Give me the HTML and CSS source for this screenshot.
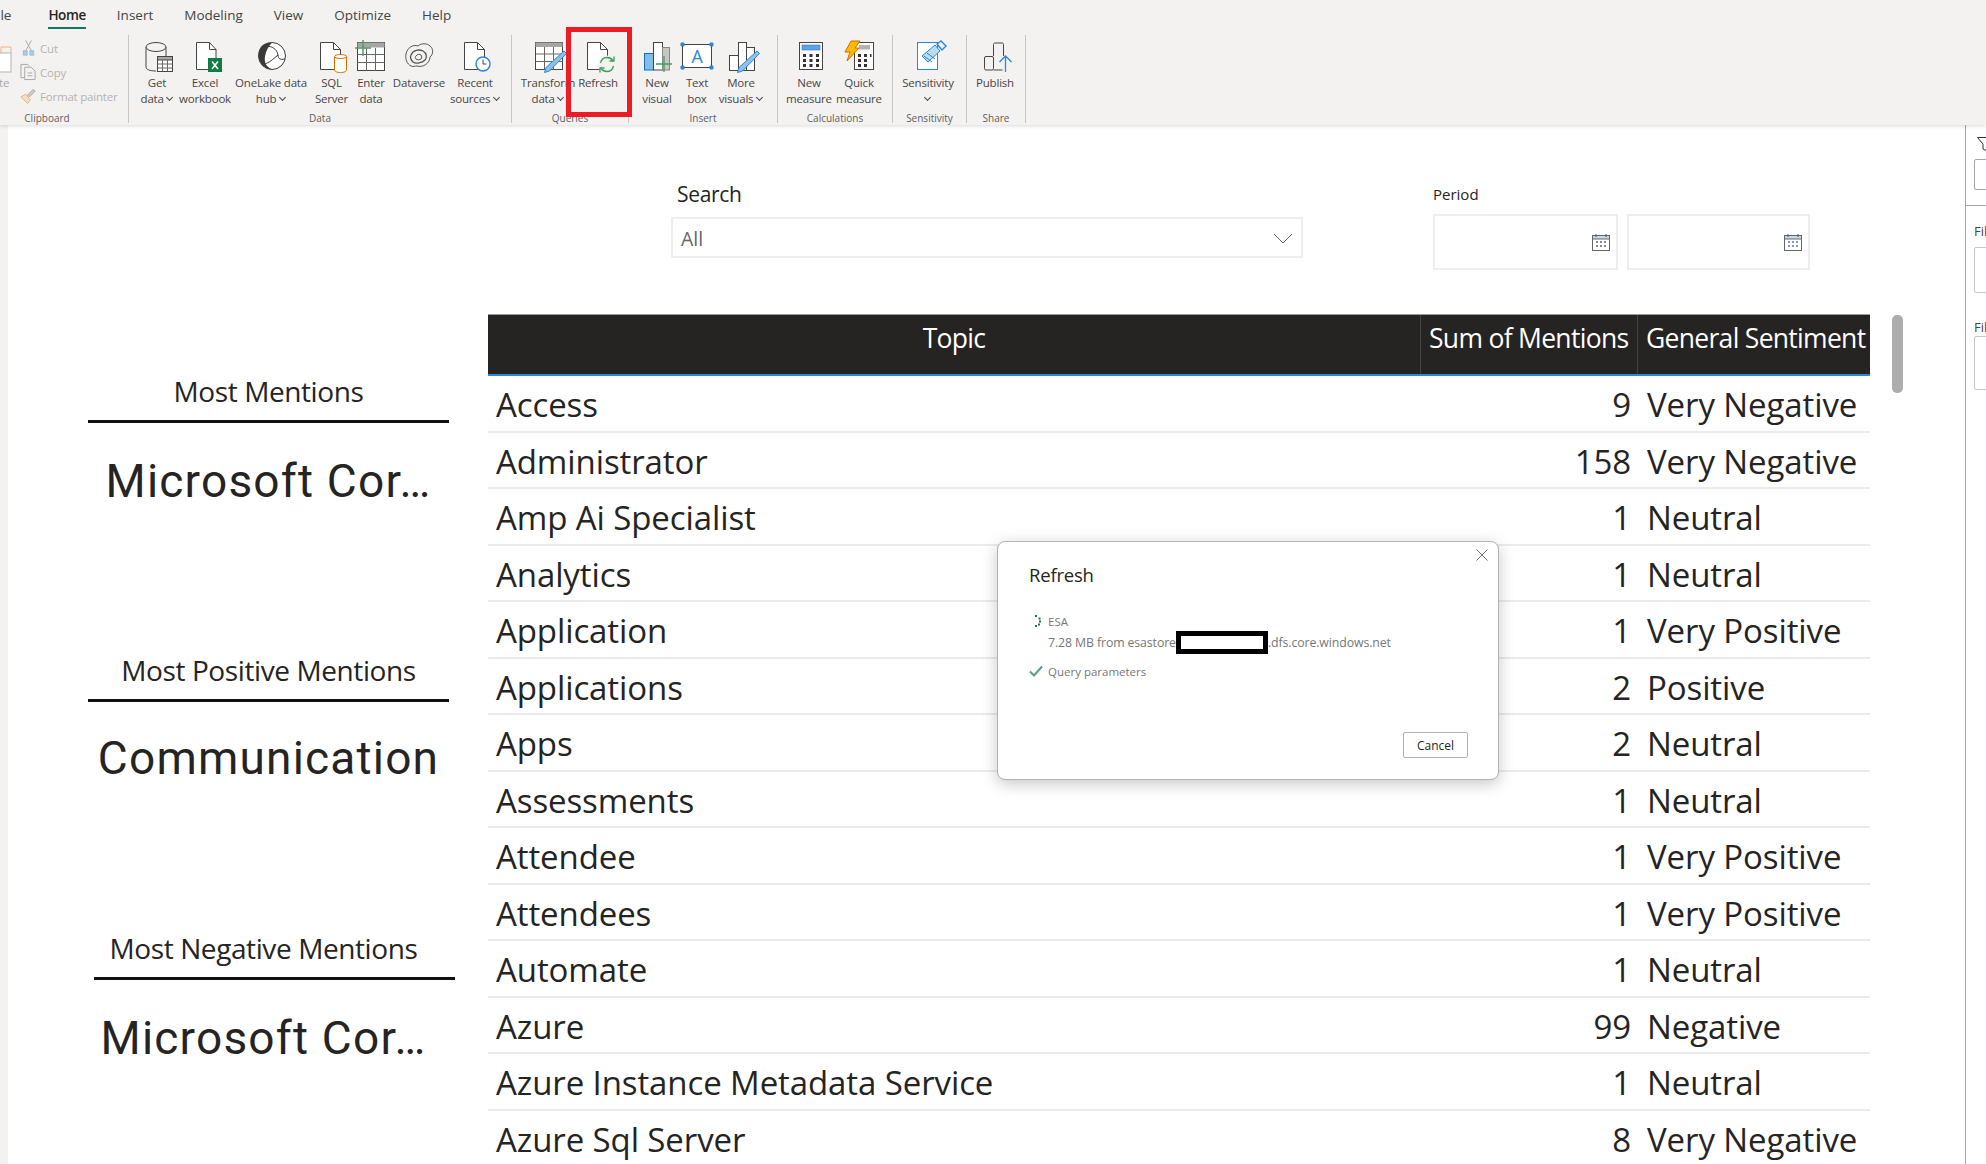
FILE: index.html
```html
<!DOCTYPE html>
<html lang="en">
<head>
    <meta charset="UTF-8">
    <meta name="viewport" content="width=device-width, initial-scale=1.0">
    <title>Power BI Desktop - Refresh</title>
    <link rel="stylesheet" href="styles.css">
</head>
<body>

    <header class="ribbon">
        <nav class="tabs">
            <span class="tab tab-file">File</span>
            <span class="tab tab-active">Home</span>
            <span class="tab">Insert</span>
            <span class="tab">Modeling</span>
            <span class="tab">View</span>
            <span class="tab">Optimize</span>
            <span class="tab">Help</span>
        </nav>

        <div class="groups">
            <section class="group group-clipboard">
                <div class="btns">
                    <div class="btn btn-paste">
                        <svg class="icon" viewBox="0 0 40 32"><path d="M26 12v-6h10v6" fill="none" stroke="#edb27c"/><rect x="5" y="12" width="31" height="19" fill="#fff" stroke="#b5b3b1"/></svg>
                        <span>Paste</span>
                    </div>
                    <div class="small-list">
                        <div class="small-item">
                            <svg viewBox="0 0 18 18"><path d="M6 1l6 11M12 1L6 12" fill="none" stroke="#a8a6a4"/><rect x="3.5" y="12" width="4" height="4.5" fill="#a9cdea" stroke="#8fbce0"/><rect x="10.5" y="12" width="4" height="4.5" fill="#a9cdea" stroke="#8fbce0"/></svg>
                            <span>Cut</span>
                        </div>
                        <div class="small-item">
                            <svg viewBox="0 0 18 18"><path d="M5 15H1V1h7l2 2" fill="none" stroke="#a8a6a4"/><path d="M5 4h7l4 4v9H5z" fill="#f3f2f1" stroke="#a8a6a4"/><path d="M8 10h5M8 13h5" stroke="#a8a6a4"/></svg>
                            <span>Copy</span>
                        </div>
                        <div class="small-item">
                            <svg viewBox="0 0 18 18"><path d="M1 10l5-3 5 6-3 4z" fill="#f8dcc0" stroke="#e8b27f"/><path d="M8 8l6-6 2 2-6 6z" fill="#cfcdcb" stroke="#a8a6a4"/></svg>
                            <span>Format painter</span>
                        </div>
                    </div>
                </div>
                <div class="group-label">Clipboard</div>
            </section>

            <section class="group group-data">
                <div class="btns">
                    <div class="btn w48">
                        <svg class="icon" viewBox="0 0 40 32">
                            <path d="M9 6v20c0 2.500 4 4 10 4M29 6v9" fill="none" stroke="#444"/>
                            <ellipse cx="19" cy="6" rx="10" ry="4.500" fill="#f3f2f1" stroke="#444"/>
                            <rect x="20.500" y="15.500" width="15" height="15" fill="#fff" stroke="#444"/>
                            <rect x="20.500" y="15.500" width="15" height="3.500" fill="#a6a6a6" stroke="#444"/>
                            <path d="M25.500 19v11M30.500 19v11M20.500 23h15M20.500 27h15" stroke="#666" fill="none"/>
                        </svg>
                        <span>Get<br>data <i class="chev"></i></span>
                    </div>
                    <div class="btn w48">
                        <svg class="icon" viewBox="0 0 40 32">
                            <path class="page" d="M11.500 1.500h13l6.500 7v20h-19.500z"/><path class="fold" d="M24.500 1.500v7h6.500"/>
                            <rect x="23" y="17" width="14" height="14" fill="#107c41"/>
                            <path d="M27 20.500l6 7.500M33 20.500l-6 7.500" stroke="#fff" stroke-width="1.600"/>
                        </svg>
                        <span>Excel<br>workbook</span>
                    </div>
                    <div class="btn w84">
                        <svg class="icon" viewBox="0 0 40 32">
                            <circle cx="21" cy="15" r="13.500" fill="#fff" stroke="#3b3a39"/>
                            <path d="M21 1.500C13 1 7 6 7.500 15c.5 7 5.500 13 13.500 13.500-6-3-8-7-7-13s3.500-10 7-14z" fill="#3b3a39"/>
                            <path d="M15 5c6 0 11 3 12 9 .5 4 2 5 7 4M13 23c5-1 8-4 14-9" fill="none" stroke="#3b3a39"/>
                        </svg>
                        <span>OneLake data<br>hub <i class="chev"></i></span>
                    </div>
                    <div class="btn w37">
                        <svg class="icon" viewBox="0 0 40 32">
                            <path class="page" d="M8.500 1.500h13l7 7v20h-20z"/><path class="fold" d="M21.500 1.500v7h7"/>
                            <path d="M22.500 16v13c0 1.500 2.500 2.500 6 2.500s6-1 6-2.500V16z" fill="#fff" stroke="#d86c00"/>
                            <ellipse cx="28.500" cy="15.500" rx="6" ry="2" fill="#fff" stroke="#d86c00"/>
                        </svg>
                        <span>SQL<br>Server</span>
                    </div>
                    <div class="btn w42">
                        <svg class="icon" viewBox="0 0 40 32">
                            <rect x="6.500" y="1.500" width="27" height="28" fill="#fff" stroke="#444"/>
                            <rect x="6.500" y="1.500" width="27" height="5" fill="#a6a6a6"/>
                            <path d="M15.500 7v23M24.500 7v23M6.500 13.500h27M6.500 21.500h27" stroke="#666" fill="none"/>
                            <path d="M12 -1v16M4 7h16" stroke="#4c9e5f" stroke-width="1.500"/>
                        </svg>
                        <span>Enter<br>data</span>
                    </div>
                    <div class="btn w54">
                        <svg class="icon" viewBox="0 0 40 32">
                            <path d="M7 13c1-6 7-10 12-8 3-3 9-3 12 0 4 3 3 9 0 11 0 6-7 11-13 9-2 0-4 1-6 0-4-2-6-7-5-12z" fill="none" stroke="#555"/>
                            <path d="M12 14c2-5 8-6 12-4 4 2 4 7 2 9-3 3-9 4-12 2-2-2-3-5-2-7z" fill="none" stroke="#555" stroke-width="1.300"/>
                            <path d="M17 15c1-2 4-2 5-1s1 3 0 4-4 1-5 0-1-2 0-3z" fill="none" stroke="#555"/>
                        </svg>
                        <span>Dataverse</span>
                    </div>
                    <div class="btn w58">
                        <svg class="icon" viewBox="0 0 40 32">
                            <path class="page" d="M9.500 1.500h13l7 7v20h-20z"/><path class="fold" d="M22.500 1.500v7h7"/>
                            <circle cx="28" cy="23" r="7" fill="#fff" stroke="#2b88d8" stroke-width="1.500"/>
                            <path d="M28 18.500V23h3.500" fill="none" stroke="#444"/>
                        </svg>
                        <span>Recent<br>sources <i class="chev"></i></span>
                    </div>
                </div>
                <div class="group-label">Data</div>
            </section>

            <section class="group group-queries">
                <div class="btns">
                    <div class="btn w52">
                        <svg class="icon" viewBox="0 0 40 32">
                            <rect x="7.500" y="1.500" width="27" height="27" fill="#fff" stroke="#444"/>
                            <rect x="7.500" y="1.500" width="27" height="4.500" fill="#a6a6a6"/>
                            <path d="M16.500 6v23M25.500 6v23M7.500 13h27M7.500 20.500h27" stroke="#666" fill="none"/>
                            <path d="M36 10l2.500 2.500-17 17.500-5 1.500 1.500-5z" fill="#8ec0ea" stroke="#2b88d8"/>
                        </svg>
                        <span>Transform<br>data <i class="chev"></i></span>
                    </div>
                    <div class="btn w48">
                        <svg class="icon" viewBox="0 0 40 32">
                            <path class="page" d="M9.500 1.500h13l7 7v20h-20z"/><path class="fold" d="M22.500 1.500v7h7"/>
                            <circle cx="29" cy="23.500" r="9" fill="#f3f2f1"/>
                            <path d="M22.500 22c.8-3.500 3.500-5.500 6.500-5.500 2.500 0 4.500 1 6 3M35.500 25c-.8 3.500-3.500 5.500-6.500 5.500-2.500 0-4.500-1-6-3" fill="none" stroke="#3e9e5b" stroke-width="1.300"/>
                            <path d="M36 15.500v4.500h-4.500M22 31.500V27h4.500" fill="none" stroke="#3e9e5b" stroke-width="1.300"/>
                        </svg>
                        <span>Refresh</span>
                    </div>
                </div>
                <div class="group-label">Queries</div>
            </section>

            <section class="group group-insert">
                <div class="btns">
                    <div class="btn w40">
                        <svg class="icon" viewBox="0 0 40 32">
                            <rect x="7.500" y="12.500" width="9" height="16.500" fill="#85bdea" stroke="#106ebe"/>
                            <rect x="16.500" y="1.500" width="9" height="27.500" fill="#fff" stroke="#444"/>
                            <rect x="25.500" y="6.500" width="7" height="22.500" fill="#c8c6c4" stroke="#8a8886"/>
                            <path d="M27 15v16M19 23h16" stroke="#3e9e5b" stroke-width="1.300"/>
                        </svg>
                        <span>New<br>visual</span>
                    </div>
                    <div class="btn w40">
                        <svg class="icon" viewBox="0 0 40 32">
                            <rect x="5.500" y="3.500" width="29" height="23" fill="#fff" stroke="#444"/>
                            <path d="M4 2h3v3H4zM33 2h3v3h-3zM4 25h3v3H4zM33 25h3v3h-3z" fill="#2b88d8" stroke="#2b88d8"/>
                            <text x="20" y="22" class="icon-letter">A</text>
                        </svg>
                        <span>Text<br>box</span>
                    </div>
                    <div class="btn w48">
                        <svg class="icon" viewBox="0 0 40 32">
                            <rect x="8.500" y="14.500" width="9" height="15" fill="#fff" stroke="#444"/>
                            <rect x="17.500" y="1.500" width="8" height="28" fill="#fff" stroke="#444"/>
                            <rect x="25.500" y="6.500" width="8" height="23" fill="#fff" stroke="#444"/>
                            <path d="M36 10l2.500 2.500-17 17.500-5 1.500 1.500-5z" fill="#8ec0ea" stroke="#2b88d8"/>
                        </svg>
                        <span>More<br>visuals <i class="chev"></i></span>
                    </div>
                </div>
                <div class="group-label">Insert</div>
            </section>

            <section class="group group-calc">
                <div class="btns">
                    <div class="btn w50">
                        <svg class="icon" viewBox="0 0 40 32">
                            <rect x="10.500" y="1.500" width="23" height="27" fill="#fff" stroke="#444"/>
                            <rect x="13" y="4" width="18" height="5" fill="#5ba5e4" stroke="#2b78c2" stroke-width=".6"/>
                            <path d="M14 13h3v3h-3zM20.500 13h3v3h-3zM27 13h3v3h-3zM14 18h3v3h-3zM20.500 18h3v3h-3zM27 18h3v3h-3zM14 23h3v3h-3zM20.500 23h3v3h-3zM27 23h3v3h-3z" fill="#333"/>
                        </svg>
                        <span>New<br>measure</span>
                    </div>
                    <div class="btn w50">
                        <svg class="icon" viewBox="0 0 40 32">
                            <rect x="15.500" y="1.500" width="19" height="27" fill="#fff" stroke="#444"/>
                            <rect x="20" y="4" width="11" height="4.500" fill="#b5b3b1"/>
                            <path d="M19 13h3v3h-3zM25 13h3v3h-3zM31 13h1.500v3H31zM19 18h3v3h-3zM25 18h3v3h-3zM19 23h3v3h-3zM25 23h3v3h-3z" fill="#333"/>
                            <path d="M12 0h9l-5 7h4L8 20l3-9H6z" fill="#ffb900" stroke="#d86c00"/>
                        </svg>
                        <span>Quick<br>measure</span>
                    </div>
                </div>
                <div class="group-label">Calculations</div>
            </section>

            <section class="group group-sens">
                <div class="btns">
                    <div class="btn w60">
                        <svg class="icon" viewBox="0 0 40 32">
                            <rect x="9.500" y="1.500" width="20" height="27" fill="#fff" stroke="#2b88d8"/>
                            <path d="M14 15l13-11 5 6-12 11z" fill="#bcdcf5" stroke="#2b88d8"/>
                            <path d="M16 15l8 6M19 12l8 6" stroke="#2b88d8"/>
                            <path d="M29 3l4-3 5 5-4 4z" fill="#f3f2f1" stroke="#2b88d8" stroke-width="1.400"/>
                        </svg>
                        <span>Sensitivity<br><i class="chev"></i></span>
                    </div>
                </div>
                <div class="group-label">Sensitivity</div>
            </section>

            <section class="group group-share">
                <div class="btns">
                    <div class="btn w48">
                        <svg class="icon" viewBox="0 0 40 32">
                            <rect x="9.500" y="15.500" width="9" height="13.500" rx="1.500" fill="none" stroke="#444"/>
                            <path d="M18.500 15V3.500c0-1 .5-1.500 1.500-1.500h7c1 0 1.500.5 1.500 1.500V15M18.500 29h9" fill="none" stroke="#444"/>
                            <path d="M30.500 31V15M24.500 21l6-6 6 6" fill="none" stroke="#2b88d8" stroke-width="1.300"/>
                        </svg>
                        <span>Publish</span>
                    </div>
                </div>
                <div class="group-label">Share</div>
            </section>
        </div>

        <div class="highlight"></div>
    </header>

    <main class="workspace">
        <div class="gutter"></div>

        <div class="canvas">
            <aside class="kpis">
                <div class="kpi">
                    <div class="kpi-title">Most Mentions</div>
                    <div class="kpi-rule"></div>
                    <div class="kpi-value">Microsoft Cor…</div>
                </div>
                <div class="kpi kpi-raised">
                    <div class="kpi-title">Most Positive Mentions</div>
                    <div class="kpi-rule"></div>
                    <div class="kpi-value">Communication</div>
                </div>
                <div class="kpi kpi-shifted">
                    <div class="kpi-title">Most Negative Mentions</div>
                    <div class="kpi-rule"></div>
                    <div class="kpi-value">Microsoft Cor…</div>
                </div>
            </aside>

            <div class="report">
                <div class="slicers">
                    <div class="slicer-search">
                        <div class="slicer-label">Search</div>
                        <div class="dropdown">
                            <span>All</span>
                            <svg viewBox="0 0 20 12" width="20" height="12"><path d="M1 1l9 9 9-9" fill="none" stroke="#666"/></svg>
                        </div>
                    </div>
                    <div class="slicer-period">
                        <div class="slicer-label-small">Period</div>
                        <div class="dates">
                            <div class="date-box date-from">
                                <svg viewBox="0 0 18 18" width="18" height="18"><rect x=".5" y="2.500" width="17" height="15" fill="#fff" stroke="#666"/><rect x=".5" y="2.500" width="17" height="3.500" fill="#c9d6e4" stroke="#666"/><path d="M4 1v3M14 1v3" stroke="#555"/><path d="M4 8h2v2H4zM8 8h2v2H8zM12 8h2v2h-2zM4 12h2v2H4zM8 12h2v2H8zM12 12h2v2h-2z" fill="#8a7fa8"/></svg>
                            </div>
                            <div class="date-box date-to">
                                <svg viewBox="0 0 18 18" width="18" height="18"><rect x=".5" y="2.500" width="17" height="15" fill="#fff" stroke="#666"/><rect x=".5" y="2.500" width="17" height="3.500" fill="#c9d6e4" stroke="#666"/><path d="M4 1v3M14 1v3" stroke="#555"/><path d="M4 8h2v2H4zM8 8h2v2H8zM12 8h2v2h-2zM4 12h2v2H4zM8 12h2v2H8zM12 12h2v2h-2z" fill="#7f9cc0"/></svg>
                            </div>
                        </div>
                    </div>
                </div>

                <div class="table-wrap">
                    <div class="data-table">
                        <div class="table-head">
                            <div class="th th-topic">Topic</div>
                            <div class="th">Sum of Mentions</div>
                            <div class="th">General Sentiment</div>
                        </div>
                        <div class="tr"><div>Access</div><div class="num">9</div><div>Very Negative</div></div>
                        <div class="tr"><div>Administrator</div><div class="num">158</div><div>Very Negative</div></div>
                        <div class="tr"><div>Amp Ai Specialist</div><div class="num">1</div><div>Neutral</div></div>
                        <div class="tr"><div>Analytics</div><div class="num">1</div><div>Neutral</div></div>
                        <div class="tr"><div>Application</div><div class="num">1</div><div>Very Positive</div></div>
                        <div class="tr"><div>Applications</div><div class="num">2</div><div>Positive</div></div>
                        <div class="tr"><div>Apps</div><div class="num">2</div><div>Neutral</div></div>
                        <div class="tr"><div>Assessments</div><div class="num">1</div><div>Neutral</div></div>
                        <div class="tr"><div>Attendee</div><div class="num">1</div><div>Very Positive</div></div>
                        <div class="tr"><div>Attendees</div><div class="num">1</div><div>Very Positive</div></div>
                        <div class="tr"><div>Automate</div><div class="num">1</div><div>Neutral</div></div>
                        <div class="tr"><div>Azure</div><div class="num">99</div><div>Negative</div></div>
                        <div class="tr"><div>Azure Instance Metadata Service</div><div class="num">1</div><div>Neutral</div></div>
                        <div class="tr"><div>Azure Sql Server</div><div class="num">8</div><div>Very Negative</div></div>
                    </div>
                    <div class="scroll-thumb"></div>
                </div>
            </div>
        </div>

        <aside class="filters">
            <div class="filters-top">
                <svg viewBox="0 0 16 16" width="16" height="16"><path d="M.5 1.500h15L10 8v7l-4-2V8z" fill="none" stroke="#333"/></svg>
                <div class="filter-search"></div>
            </div>
            <div class="filter-block">
                <div class="filter-title">Filters on this page</div>
                <div class="filter-box box-a"></div>
                <div class="filter-title filter-title-b">Filters on all pages</div>
                <div class="filter-box box-b"></div>
            </div>
        </aside>
    </main>

    <div class="dialog">
        <svg class="dialog-close" viewBox="0 0 12 12" width="12" height="12"><path d="M.5.5l11 11M11.500.5l-11 11" stroke="#777"/></svg>
        <h2 class="dialog-title">Refresh</h2>
        <div class="load-row">
            <svg class="load-icon" viewBox="0 0 14 14" width="14" height="14"><path d="M6 1h2v2H6zM9.500 3.500h2v2h-2zM10 6.500h2v2h-2zM9 9.500h2v2H9zM6 11h2v2H6z" fill="#217346"/></svg>
            <span>ESA</span>
        </div>
        <div class="load-detail">7.28 MB from esastore<span class="redacted"></span>.dfs.core.windows.net</div>
        <div class="load-row load-done">
            <svg class="load-icon" viewBox="0 0 14 14" width="14" height="14"><path d="M1 7.500l4 4L13 2.500" fill="none" stroke="#5c9e8a" stroke-width="2.200"/></svg>
            <span>Query parameters</span>
        </div>
        <button class="cancel" type="button">Cancel</button>
    </div>

</body>
</html>
```

FILE: styles.css
```css
html, body {
    height: 100%;
}

body {
    font-family: "Open Sans", "Noto Sans", sans-serif;
    background-color: #fff;
    color: #252423;
    margin: 0;
    overflow: hidden;
    display: flex;
    flex-direction: column;
}

/* ribbon */

.ribbon {
    position: relative;
    z-index: 2;
    flex: none;
    height: 125px;
    background-color: #f3f2f1;
    box-shadow: 0 1px 4px rgba(0, 0, 0, 0.15);
    overflow: hidden;
}

.tabs {
    display: flex;
    height: 35px;
    gap: 31px;
    margin-left: -10px;
    font-size: 13.500px;
    color: #444;
}

.tab {
    height: 22px;
    padding-top: 6px;
    line-height: 18px;
}

.tab-file {
    margin-right: 6px;
}

.tab-active {
    font-weight: 600;
    color: #252423;
    border-bottom: 2px solid #117865;
    height: 21px;
    letter-spacing: -0.4px;
}

.groups {
    display: flex;
    height: 88px;
}

.group {
    flex: none;
    display: flex;
    flex-direction: column;
    border-right: 1px solid #c8c6c4;
    box-sizing: border-box;
}

.group-clipboard { width: 161px; margin-left: -32px; }
.group-data { width: 383px; }
.group-queries { width: 117px; }
.group-insert { width: 149px; }
.group-calc { width: 115px; }
.group-sens { width: 74px; }
.group-share { width: 59px; }

.btns {
    display: flex;
    height: 77px;
    flex: none;
}

.group-clipboard .btns { padding-left: 7px; }
.group-data .btns { padding-left: 4px; }
.group-queries .btns { padding-left: 10px; }
.group-insert .btns { padding-left: 8px; }
.group-calc .btns { padding-left: 6px; }
.group-sens .btns { padding-left: 5px; }
.group-share .btns { padding-left: 4px; }

.btn {
    flex: none;
    display: flex;
    flex-direction: column;
    align-items: center;
    font-size: 11.500px;
    line-height: 16px;
    text-align: center;
    color: #484644;
    white-space: nowrap;
    letter-spacing: -0.2px;
}

.btn-paste { width: 40px; color: #a8a6a4; }
.w37 { width: 37px; }
.w40 { width: 40px; }
.w42 { width: 42px; }
.w48 { width: 48px; }
.w50 { width: 50px; }
.w52 { width: 52px; }
.w54 { width: 54px; }
.w58 { width: 58px; }
.w60 { width: 60px; }
.w84 { width: 84px; }

.icon {
    flex: none;
    width: 40px;
    height: 32px;
    margin-top: 6px;
    margin-bottom: 2px;
    overflow: visible;
}

.page {
    fill: #fff;
    stroke: #444;
}

.fold {
    fill: none;
    stroke: #444;
}

.icon-letter {
    font-family: "Open Sans", sans-serif;
    font-size: 18px;
    fill: #2b88d8;
    text-anchor: middle;
}

.chev {
    display: inline-block;
    width: 4px;
    height: 4px;
    margin: 0 1px 3px 1px;
    border-right: 1px solid #484644;
    border-bottom: 1px solid #484644;
    transform: rotate(45deg);
}

.small-list {
    margin-left: 5px;
    padding-top: 1px;
    font-size: 11.500px;
    color: #b5b3b1;
    white-space: nowrap;
    letter-spacing: -0.2px;
}

.small-item {
    display: flex;
    align-items: center;
    gap: 3px;
    height: 24px;
}

.small-item svg {
    width: 17px;
    height: 18px;
}

.group-label {
    font-size: 10px;
    line-height: 12px;
    text-align: center;
    color: #605e5c;
}

.group-clipboard .group-label {
    padding-right: 2px;
}

.highlight {
    position: absolute;
    left: 566px;
    top: 27px;
    width: 66px;
    height: 90px;
    box-sizing: border-box;
    border: 5px solid #ed1c24;
}

/* report area */

.workspace {
    flex: 1;
    min-height: 0;
    display: flex;
}

.gutter {
    flex: none;
    width: 8px;
    background-color: #f3f2f1;
}

.canvas {
    flex: 1;
    min-width: 0;
    display: flex;
    padding-left: 80px;
}

.kpis {
    flex: none;
    width: 400px;
    padding-top: 249px;
    display: flex;
    flex-direction: column;
    gap: 141.500px;
}

.kpi {
    height: 137px;
}

.kpi-title {
    width: 361px;
    height: 36px;
    line-height: 34px;
    font-size: 28px;
    letter-spacing: -0.4px;
    text-align: center;
    white-space: nowrap;
}

.kpi-rule {
    width: 361px;
    height: 3px;
    margin-top: 10px;
    background-color: #111;
}

.kpi-value {
    width: 361px;
    height: 60px;
    line-height: 60px;
    margin-top: 28px;
    font-family: Roboto, sans-serif;
    font-size: 46px;
    letter-spacing: 1.200px;
    text-align: center;
    white-space: nowrap;
}

.kpi-raised .kpi-value {
    margin-top: 26px;
}

.kpi-shifted .kpi-title,
.kpi-shifted .kpi-value {
    margin-left: -5px;
}

.kpi-shifted .kpi-rule {
    margin-left: 6px;
}

.report {
    flex: none;
    width: 1414px;
}

.slicers {
    display: flex;
    align-items: flex-start;
    padding-top: 55px;
    padding-left: 183px;
    margin-bottom: 44px;
}

.slicer-search {
    flex: none;
    width: 632px;
    margin-right: 130px;
}

.slicer-label {
    height: 28px;
    line-height: 28px;
    padding-left: 6px;
    font-size: 21px;
    letter-spacing: -0.3px;
    margin-bottom: 9px;
}

.slicer-label-small {
    height: 28px;
    line-height: 28px;
    font-size: 15px;
    margin-bottom: 6px;
}

.dropdown {
    display: flex;
    align-items: center;
    justify-content: space-between;
    height: 41px;
    box-sizing: border-box;
    border: 2px solid #eee;
    padding: 2px 8px 0 8px;
    font-size: 19.500px;
    color: #666;
}

.dates {
    display: flex;
    gap: 9px;
}

.date-box {
    display: flex;
    align-items: center;
    justify-content: flex-end;
    height: 56px;
    box-sizing: border-box;
    border: 2px solid #eee;
    padding: 0 6px 0 0;
}

.date-from { width: 185px; }
.date-to { width: 183px; }

.table-wrap {
    display: flex;
    align-items: flex-start;
    gap: 22px;
}

.data-table {
    flex: none;
    width: 1382px;
}

.table-head {
    display: grid;
    grid-template-columns: 933px 217px 232px;
    height: 62px;
    box-sizing: border-box;
    background-color: #252423;
    border-top: 1px solid #999;
    border-bottom: 2px solid #2b88d8;
    color: #fff;
    font-size: 26.500px;
    letter-spacing: -0.700px;
}

.th {
    padding: 4px 0 0 8px;
    line-height: 38px;
    white-space: nowrap;
    border-right: 1px solid #444;
}

.th:last-child {
    border-right: none;
}

.th-topic {
    padding-left: 0;
    text-align: center;
}

.tr {
    display: grid;
    grid-template-columns: 933px 217px 232px;
    align-items: center;
    height: 56.500px;
    box-sizing: border-box;
    padding-top: 3px;
    border-bottom: 2px solid #ebebeb;
    font-size: 33px;
    letter-spacing: -0.100px;
    white-space: nowrap;
}

.tr div {
    padding-left: 8px;
}

.tr .num {
    padding-left: 0;
    padding-right: 7px;
    text-align: right;
}

.tr div:last-child {
    padding-left: 9px;
}

.scroll-thumb {
    flex: none;
    width: 11px;
    height: 78px;
    margin-top: 1px;
    border-radius: 5px;
    background-color: #adadad;
}

/* filter pane, cut off by the window edge */

.filters {
    flex: none;
    width: 21px;
    box-sizing: border-box;
    border-left: 1px solid #a8a6a4;
    overflow: hidden;
    font-size: 13px;
    color: #444;
    white-space: nowrap;
}

.filters-top {
    height: 81px;
    box-sizing: border-box;
    padding: 11px 0 0 11px;
    border-bottom: 1px solid #a8a6a4;
}

.filter-search {
    width: 60px;
    height: 31px;
    box-sizing: border-box;
    margin-top: 3px;
    margin-left: -3px;
    border: 1px solid #a8a6a4;
    border-radius: 2px;
}

.filter-block {
    padding: 16px 0 0 8px;
}

.filter-title {
    line-height: 18px;
}

.filter-title-b {
    margin-top: 25px;
}

.filter-box {
    width: 60px;
    box-sizing: border-box;
    border: 1px solid #c8c6c4;
    border-radius: 2px;
}

.box-a { height: 46px; margin-top: 7px; }
.box-b { height: 54px; margin-top: 0; }

/* refresh dialog */

.dialog {
    position: absolute;
    z-index: 3;
    left: 997px;
    top: 541px;
    width: 502px;
    height: 239px;
    box-sizing: border-box;
    display: flex;
    flex-direction: column;
    padding: 21px 30px 21px 31px;
    background-color: #fff;
    border: 1px solid #b5b3b1;
    border-radius: 8px;
    box-shadow: 0 4px 16px rgba(0, 0, 0, 0.22);
    font-size: 11.500px;
    color: #777;
}

.dialog-close {
    position: absolute;
    right: 10px;
    top: 7px;
}

.dialog-title {
    margin: 0 0 24px 0;
    font-size: 18.500px;
    line-height: 24px;
    font-weight: 500;
    color: #252423;
    letter-spacing: -0.2px;
}

.load-row {
    display: flex;
    align-items: center;
    gap: 5px;
    height: 20px;
}

.load-icon {
    flex: none;
}

.load-detail {
    height: 20px;
    line-height: 20px;
    margin-left: 19px;
    font-size: 12.300px;
    white-space: nowrap;
    letter-spacing: -0.1px;
}

.redacted {
    display: inline-block;
    width: 92px;
    height: 23px;
    box-sizing: border-box;
    margin-bottom: -7px;
    border: 5px solid #000;
    background-color: #fff;
}

.load-done {
    margin-top: 10px;
}

.cancel {
    margin-top: auto;
    align-self: flex-end;
    width: 65px;
    height: 26px;
    padding: 0;
    background-color: #fff;
    border: 1px solid #b5b3b1;
    border-radius: 2px;
    font-family: inherit;
    font-size: 12px;
    color: #252423;
}
```
